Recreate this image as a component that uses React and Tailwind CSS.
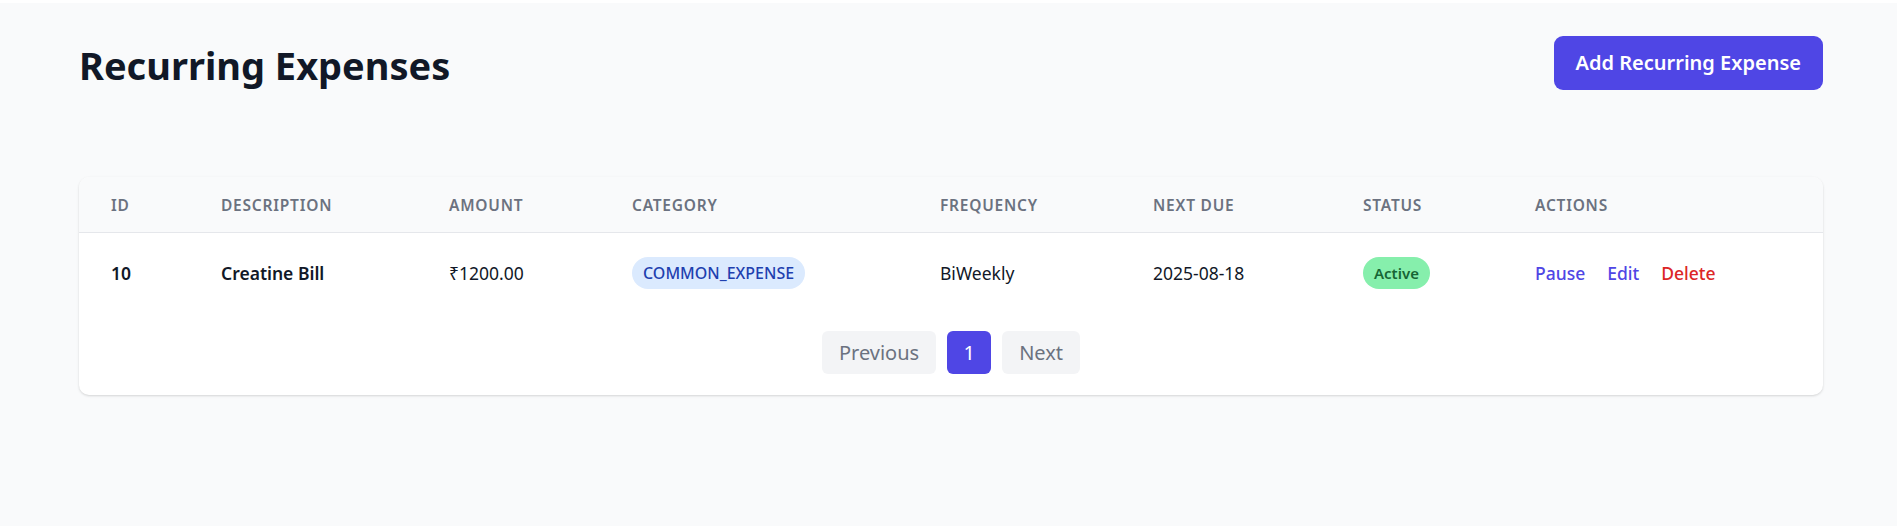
import React from 'react';

const expenses = [
    {
        id: 10,
        description: 'Creatine Bill',
        amount: '₹1200.00',
        category: 'COMMON_EXPENSE',
        frequency: 'BiWeekly',
        nextDue: '2025-08-18',
        status: 'Active',
    },
];

const columns = [
    { label: 'ID', width: 'w-[110px]' },
    { label: 'Description', width: 'w-[228px]' },
    { label: 'Amount', width: 'w-[183px]' },
    { label: 'Category', width: 'w-[308px]' },
    { label: 'Frequency', width: 'w-[213px]' },
    { label: 'Next Due', width: 'w-[210px]' },
    { label: 'Status', width: 'w-[172px]' },
    { label: 'Actions', width: '' },
];

const App = () => {
    return (
        <div
            className="min-h-screen bg-[#f9fafb] border-t-[3px] border-white pt-[33px] pl-[79px] pr-[74px]"
            style={{ fontFamily: '"Noto Sans", "Open Sans", sans-serif' }}
        >
            <div className="flex items-center justify-between h-[54px]">
                <h1 className="pt-[5px] text-[38px] leading-[45px] font-bold text-[#111827]">Recurring Expenses</h1>
                <button className="h-[54px] px-[22px] rounded-[9px] bg-[#4f46e5] text-white text-[20px] font-semibold">
                    Add Recurring Expense
                </button>
            </div>

            <div className="mt-[87px] bg-white rounded-[10px] shadow-[0_1px_3px_rgba(0,0,0,0.1),0_1px_2px_rgba(0,0,0,0.06)] overflow-hidden">
                <table className="w-full table-fixed text-left">
                    <thead className="bg-[#f9fafb]">
                        <tr className="border-b border-[#e5e7eb]">
                            {columns.map((col) => (
                                <th
                                    key={col.label}
                                    className={`${col.width} h-[55px] pl-[32px] pt-[3px] align-middle text-[15.5px] font-semibold uppercase tracking-wider text-[#6b7280]`}
                                >
                                    {col.label}
                                </th>
                            ))}
                        </tr>
                    </thead>
                    <tbody>
                        {expenses.map((item) => (
                            <tr key={item.id} className="h-[77px]">
                                <td className="pl-[32px] pt-[4px] align-middle text-[17.5px] font-semibold text-[#111827]">{item.id}</td>
                                <td className="pl-[32px] pt-[4px] align-middle text-[17.5px] font-semibold text-[#111827]">{item.description}</td>
                                <td className="pl-[32px] pt-[4px] align-middle text-[17.5px] text-[#111827]">{item.amount}</td>
                                <td className="pl-[32px] pt-[4px] align-middle">
                                    <span className="inline-flex items-center h-[32px] px-[11px] rounded-full bg-[#dbeafe] text-[#1e40af] text-[16px] font-medium">
                                        {item.category}
                                    </span>
                                </td>
                                <td className="pl-[32px] pt-[4px] align-middle text-[17.5px] text-[#111827]">{item.frequency}</td>
                                <td className="pl-[32px] pt-[4px] align-middle text-[17.5px] text-[#111827]">{item.nextDue}</td>
                                <td className="pl-[32px] pt-[4px] align-middle">
                                    <span className="inline-flex items-center h-[32px] px-[11px] rounded-full bg-[#86efac] text-[#166534] text-[15px] font-semibold">
                                        {item.status}
                                    </span>
                                </td>
                                <td className="pl-[32px] pt-[4px] align-middle">
                                    <div className="flex gap-[22px] text-[17.5px] font-medium">
                                        <button className="text-[#4f46e5]">Pause</button>
                                        <button className="text-[#4f46e5]">Edit</button>
                                        <button className="text-[#dc2626]">Delete</button>
                                    </div>
                                </td>
                            </tr>
                        ))}
                    </tbody>
                </table>

                <div className="flex justify-center gap-[11px] pt-[22px] pb-[21px]">
                    <button className="h-[43px] px-[17px] rounded-[6px] bg-[#f3f4f6] text-[20px] text-[#6b7280]">Previous</button>
                    <button className="h-[43px] w-[44px] rounded-[6px] bg-[#4f46e5] text-[20px] text-white">1</button>
                    <button className="h-[43px] px-[17px] rounded-[6px] bg-[#f3f4f6] text-[20px] text-[#6b7280]">Next</button>
                </div>
            </div>
        </div>
    );
};

export default App;
